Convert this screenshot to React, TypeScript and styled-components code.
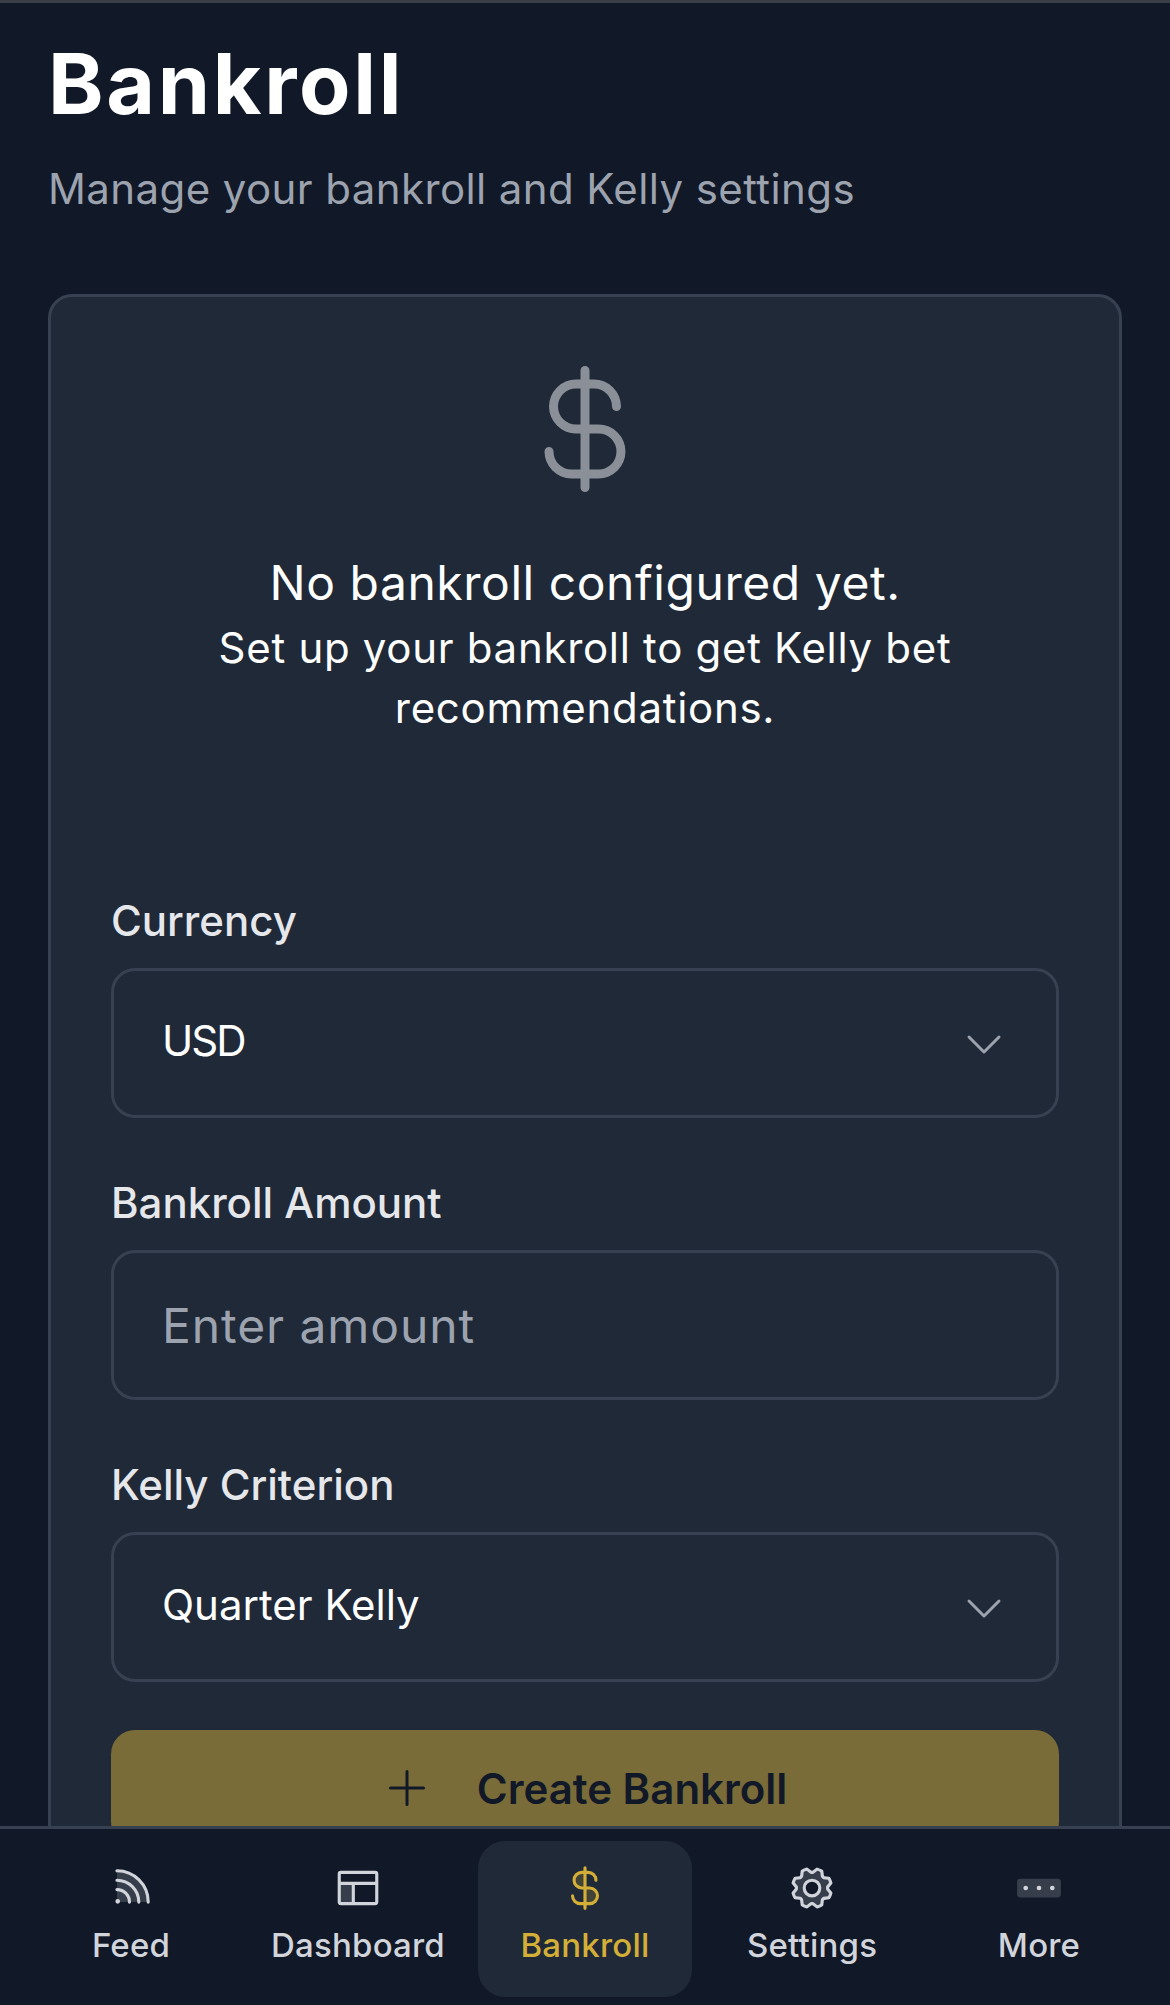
import React from "react";
import styled, { createGlobalStyle } from "styled-components";
import {
  PiCurrencyDollar,
  PiCurrencyDollarDuotone,
  PiCaretDown,
  PiPlus,
  PiRssDuotone,
  PiLayoutDuotone,
  PiGearDuotone,
  PiDotsThreeDuotone,
} from "react-icons/pi";

const Global = createGlobalStyle`
  html, body { margin: 0; padding: 0; background: #111827; height: 2005px; overflow: hidden; }
  * { box-sizing: border-box; }
  body { font-family: Inter, "Liberation Sans", sans-serif; }
`;
const Page = styled.div`
  height: 2005px; overflow: hidden; padding: 33px 48px 0;
  border-top: 3px solid #3a3f47;
  background: #111827;
`;
const Title = styled.h1`
  margin: 0; font-size: 84px; line-height: 96px; font-weight: 700; color: #fff; letter-spacing: 2.7px;
`;
const Subtitle = styled.p`
  margin: 27px 0 0; font-size: 42px; line-height: 60px; color: #9ca3af; font-weight: 400; letter-spacing: 0.4px;
`;
const Card = styled.section`
  margin-top: 75px; background: #1f2937; border: 3px solid #374151; border-radius: 24px;
  padding: 60px 60px 60px;
`;
const Empty = styled.div`
  display: flex; flex-direction: column; align-items: center; text-align: center; margin-bottom: 153px;
`;
const EmptyIcon = styled(PiCurrencyDollar)`
  color: #8b9098; margin-bottom: 46px;
`;
const EmptyTitle = styled.p`
  margin: 0; font-size: 48px; line-height: 72px; color: #fff; letter-spacing: 0.55px;
`;
const EmptyText = styled.p`
  margin: -1px 0 0; font-size: 42px; line-height: 60px; color: #fff; letter-spacing: 0.7px;
`;
const Field = styled.div`
  & + & { margin-top: 55px; }
`;
const Label = styled.label`
  display: block; font-size: 42px; line-height: 60px; font-weight: 500; color: #e5e7eb; margin-bottom: 17px;
`;
const Control = styled.div`
  height: 150px; border: 3px solid #374151; border-radius: 24px; padding: 0 48px;
  display: flex; align-items: center; justify-content: space-between; background: #1f2937;
`;
const Value = styled.span<{ $spacing?: number }>`
  font-size: 42px; color: #fff; letter-spacing: ${p => p.$spacing ?? 0}px; margin-top: -5px;
`;
const Placeholder = styled.span`
  font-size: 48px; color: #9ca3af; letter-spacing: 0.9px;
`;
const Chevron = styled(PiCaretDown)`
  color: #9ca3af; flex: none;
`;
const CreateButton = styled.button`
  width: 100%; height: 116px; margin-top: 48px; border: 0; border-radius: 24px; background: #7a6c38; color: #111827;
  font: 600 42px Inter, sans-serif; display: flex; align-items: center; justify-content: center; gap: 46px;
`;
const Nav = styled.nav`
  position: fixed; left: 0; right: 0; bottom: 0; height: 179px; background: #111827;
  border-top: 3px solid #374151; display: grid; grid-template-columns: repeat(5, 1fr); padding: 12px 17.5px 8px;
  align-items: stretch;
`;
const Tab = styled.div<{ $active?: boolean }>`
  display: flex; flex-direction: column; align-items: center; justify-content: center; gap: 12px;
  margin: 0 6.5px; padding-bottom: 10px; border-radius: 27px; font-size: 33px; font-weight: 500;
  color: ${p => (p.$active ? "#d4af37" : "#d1d5db")};
  background: ${p => (p.$active ? "#1f2937" : "transparent")};
`;
const TabLabel = styled.span` white-space: nowrap; letter-spacing: 0.2px; `;

export default function App() {
  return (
    <Page>
      <Global />
      <Title>Bankroll</Title>
      <Subtitle>Manage your bankroll and Kelly settings</Subtitle>
      <Card>
        <Empty>
          <EmptyIcon size={144} />
          <EmptyTitle>No bankroll configured yet.</EmptyTitle>
          <EmptyText>Set up your bankroll to get Kelly bet<br />recommendations.</EmptyText>
        </Empty>
        <Field>
          <Label>Currency</Label>
          <Control><Value $spacing={-2}>USD</Value><Chevron size={48} /></Control>
        </Field>
        <Field>
          <Label>Bankroll Amount</Label>
          <Control><Placeholder>Enter amount</Placeholder></Control>
        </Field>
        <Field>
          <Label>Kelly Criterion</Label>
          <Control><Value>Quarter Kelly</Value><Chevron size={48} /></Control>
        </Field>
        <CreateButton><PiPlus size={48} />Create Bankroll</CreateButton>
      </Card>
      <Nav>
        <Tab><PiRssDuotone size={50} /><TabLabel>Feed</TabLabel></Tab>
        <Tab><PiLayoutDuotone size={50} /><TabLabel>Dashboard</TabLabel></Tab>
        <Tab $active><PiCurrencyDollarDuotone size={50} /><TabLabel>Bankroll</TabLabel></Tab>
        <Tab><PiGearDuotone size={50} /><TabLabel>Settings</TabLabel></Tab>
        <Tab><PiDotsThreeDuotone size={50} /><TabLabel>More</TabLabel></Tab>
      </Nav>
    </Page>
  );
}
